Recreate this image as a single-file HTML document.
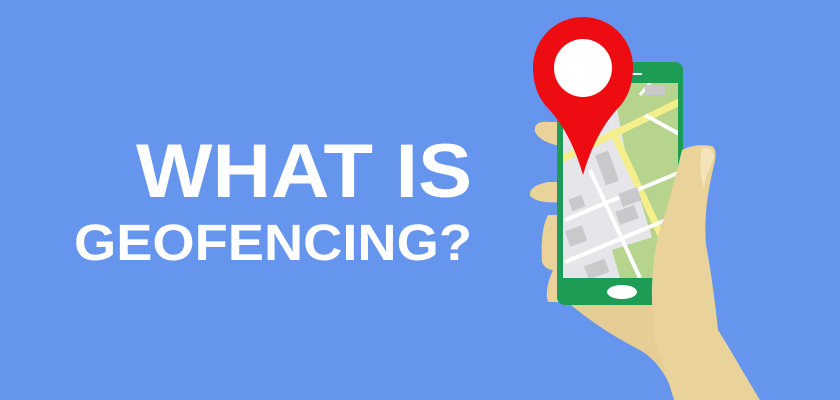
<!DOCTYPE html>
<html><head><meta charset="utf-8"><style>
html,body{margin:0;padding:0;background:#6595ec;}
svg{display:block}
</style></head><body>
<svg width="840" height="400" viewBox="0 0 840 400" xmlns="http://www.w3.org/2000/svg">
<rect width="840" height="400" fill="#6595ec"/>
<text x="136" y="197" font-family="Liberation Sans, sans-serif" font-weight="bold" font-size="76" fill="#fff" textLength="336" lengthAdjust="spacingAndGlyphs">WHAT IS</text>
<text x="74" y="260" font-family="Liberation Sans, sans-serif" font-weight="bold" font-size="51" fill="#fff" textLength="398" lengthAdjust="spacingAndGlyphs">GEOFENCING?</text>
<!-- back fingers -->
<path d="M550 122 Q533 120 535 132 Q540 142 560 146 L565 146 L565 122 Z" fill="#ead39b"/>
<path d="M548 182 Q528 186 530 196 Q538 204 562 202 L565 182 Z" fill="#ead39b"/>
<path d="M548 215 Q540 230 542 262 Q546 272 560 270 L560 215 Z" fill="#ead39b"/>
<path d="M553 270 Q544 290 548 302 L562 302 L562 270 Z" fill="#ead39b"/>
<!-- palm under phone -->
<path d="M565 300 Q600 330 640 350 Q665 365 675 400 L760 400 L700 300 Z" fill="#e5cd95"/>
<!-- phone -->
<rect x="557" y="62" width="126" height="243" rx="8" fill="#1d9c55"/>
<rect x="563" y="83" width="115" height="195" fill="#e6e6ea"/>
<clipPath id="sc"><rect x="563" y="83" width="115" height="195"/></clipPath>
<g clip-path="url(#sc)">
<path d="M612 83 L690 83 L690 278 L665 278 Q640 200 625 150 Z" fill="#b7d48f"/>
<path d="M612 250 L690 225 L690 278 L620 278 Z" fill="#b7d48f"/>
<path d="M560 160 L700 92" stroke="#f4ef8a" stroke-width="7"/>
<path d="M612 130 L668 250" stroke="#f4ef8a" stroke-width="7"/>
<path d="M565 220 L690 168" stroke="#fff" stroke-width="4"/>
<path d="M565 262 L690 210" stroke="#fff" stroke-width="4"/>
<path d="M590 170 L640 278" stroke="#fff" stroke-width="4"/>
<path d="M645 115 L690 140" stroke="#fff" stroke-width="4"/>
<path d="M640 95 L650 83" stroke="#fff" stroke-width="3"/>
<rect x="600" y="152" width="14" height="32" fill="#c9c9cc" transform="rotate(-20 607 168)"/>
<rect x="620" y="190" width="20" height="14" fill="#c9c9cc" transform="rotate(-20 630 197)"/>
<rect x="617" y="208" width="20" height="14" fill="#c9c9cc" transform="rotate(-20 627 215)"/>
<rect x="567" y="228" width="18" height="16" fill="#c9c9cc" transform="rotate(-20 576 236)"/>
<rect x="586" y="262" width="22" height="14" fill="#c9c9cc" transform="rotate(-20 597 270)"/>
<rect x="570" y="197" width="14" height="12" fill="#c9c9cc" transform="rotate(-20 577 203)"/>
<rect x="645" y="85" width="20" height="10" fill="#c9c9cc"/>
</g>
<rect x="632" y="73" width="10" height="2" fill="#fff"/>
<ellipse cx="622" cy="292" rx="15" ry="7" fill="#fff"/>
<!-- thumb -->
<path d="M682 150 Q695 143 712 146 Q718 150 714 165 Q703 210 706 245 Q712 275 718 330 Q740 365 758 400 L674 400 Q665 370 655 340 Q650 300 653 270 Q655 240 665 215 Q676 175 682 150 Z" fill="#ead39b"/>
<path d="M702 148 Q714 146 714 158 Q706 175 704 188 Q698 170 702 148 Z" fill="#f3e3b8"/>
<!-- pin -->
<path d="M583 175 Q570 130 545 105 Q533 90 533 67 A50 50 0 0 1 633 67 Q633 90 621 105 Q596 130 583 175 Z" fill="#ec0c12"/>
<circle cx="583" cy="68" r="29" fill="#fff"/>
</svg>
</body></html>
